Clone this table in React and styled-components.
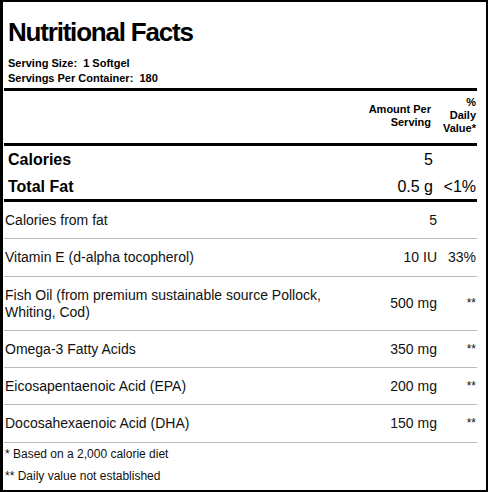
import styled, { createGlobalStyle, css } from 'styled-components'

const GlobalStyle = createGlobalStyle`
  body {
    margin: 0;
    background: #fff;
    font-family: "Liberation Sans", Arial, sans-serif;
    color: #000;
  }
`

const Frame = styled.div`
  width: 488px;
  height: 492px;
  box-sizing: border-box;
  border: 2px solid #000;
  border-left-width: 3px;
  padding: 15px 9px 0 1px;
  display: flex;
  flex-direction: column;
`

const Heading = styled.div`
  padding-left: 4px;
`

const Title = styled.h1`
  margin: 0;
  font-size: 26px;
  line-height: 30px;
  font-weight: bold;
  letter-spacing: -1.2px;
`

const Serving = styled.div`
  margin-top: 9px;
  font-size: 11px;
  line-height: 15px;
  font-weight: bold;
`

const HeadRow = styled.div`
  display: flex;
  align-items: center;
  margin-top: 2px;
  padding: 5px 0 8px;
  border-top: 3px solid #000;
  border-bottom: 3px solid #000;
  font-size: 11px;
  line-height: 13px;
  font-weight: bold;
`

const MajorGroup = styled.div`
  border-bottom: 3px solid #000;
`

const Row = styled.div`
  display: flex;
  align-items: center;
  ${p => p.$major ? css`
    padding: 4px 0 3.5px;
    font-size: 16px;
    line-height: 19px;
  ` : css`
    padding: 10px 0 9.3px;
    font-size: 14px;
    line-height: 17px;
    color: #111;
    border-bottom: 1px solid #bbb;
  `}
`

const Label = styled.div`
  flex: 1;
  padding-left: ${p => p.$major ? '4px' : '1px'};
  font-weight: ${p => p.$major ? 'bold' : 'normal'};
`

const Amount = styled.div`
  width: 90px;
  text-align: right;
  padding-right: ${p => p.$pad || 0}px;
  box-sizing: border-box;
`

const Daily = styled.div`
  width: 40px;
  text-align: right;
  padding-right: 1px;
  box-sizing: border-box;
  font-size: ${p => p.$small ? '12px' : 'inherit'};
`

const Notes = styled.div`
  font-size: 12px;
  line-height: 22px;
  padding-left: 1px;
  color: #111;
`

const rows = [
  { label: 'Calories from fat', amount: '5' },
  { label: 'Vitamin E (d-alpha tocopherol)', amount: '10 IU', dv: '33%' },
  { label: 'Fish Oil (from premium sustainable source Pollock, Whiting, Cod)', amount: '500 mg', dv: '**' },
  { label: 'Omega-3 Fatty Acids', amount: '350 mg', dv: '**' },
  { label: 'Eicosapentaenoic Acid (EPA)', amount: '200 mg', dv: '**' },
  { label: 'Docosahexaenoic Acid (DHA)', amount: '150 mg', dv: '**' }
]

export default function App () {
  return (
    <>
      <GlobalStyle />
      <Frame>
        <Heading>
          <Title>Nutritional Facts</Title>
          <Serving>
            <div>Serving Size:&nbsp; 1 Softgel</div>
            <div>Servings Per Container:&nbsp; 180</div>
          </Serving>
        </Heading>
        <HeadRow>
          <Label />
          <Amount $pad={6}>Amount Per<br />Serving</Amount>
          <Daily>%<br />Daily<br />Value*</Daily>
        </HeadRow>
        <MajorGroup>
          <Row $major>
            <Label $major>Calories</Label>
            <Amount $pad={4}>5</Amount>
            <Daily />
          </Row>
          <Row $major>
            <Label $major>Total Fat</Label>
            <Amount $pad={4}>0.5 g</Amount>
            <Daily>&lt;1%</Daily>
          </Row>
        </MajorGroup>
        {rows.map(r => (
          <Row key={r.label}>
            <Label>{r.label}</Label>
            <Amount>{r.amount}</Amount>
            <Daily $small={r.dv === '**'}>{r.dv}</Daily>
          </Row>
        ))}
        <Notes>
          <div>* Based on a 2,000 calorie diet</div>
          <div>** Daily value not established</div>
        </Notes>
      </Frame>
    </>
  )
}
